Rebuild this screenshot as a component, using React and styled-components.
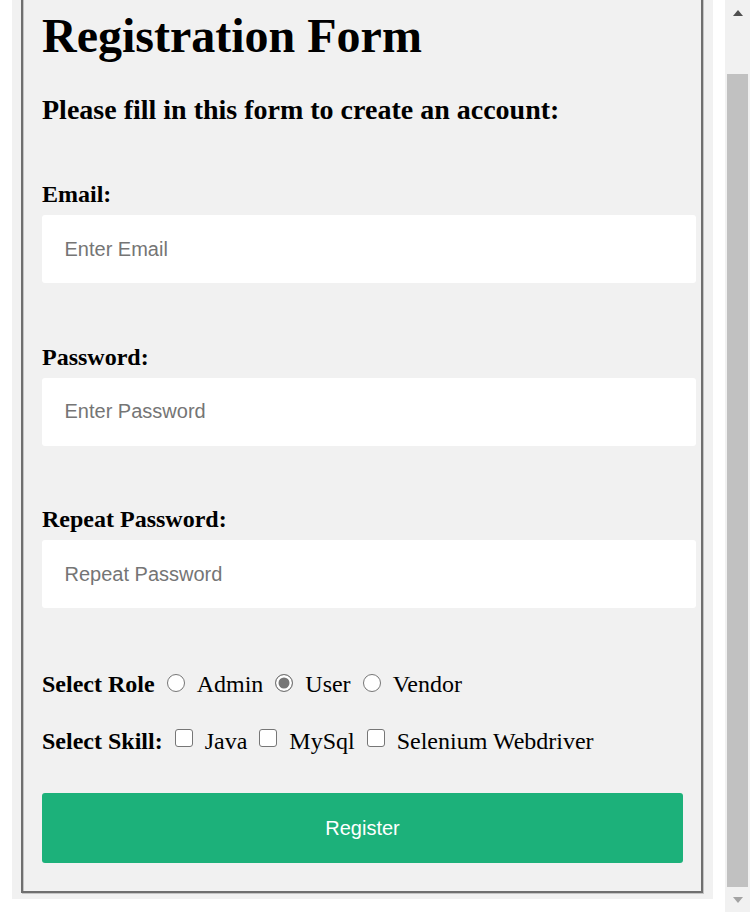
import React, { useLayoutEffect, useRef, useState } from "react";
import styled, { createGlobalStyle } from "styled-components";

const GlobalStyle = createGlobalStyle`
  html, body {
    margin: 0;
    padding: 0;
    height: 100%;
    overflow: hidden;
    background: #ffffff;
  }
  body {
    font-family: "Liberation Serif", "Times New Roman", serif;
    color: #000000;
  }
  * { box-sizing: border-box; }
`;

const Screen = styled.div`
  display: flex;
  width: 100vw;
  height: 100vh;
  background: #ffffff;
`;

const Viewport = styled.div`
  flex: 1;
  overflow: hidden;
`;

const Page = styled.div`
  padding: 12px 12px 13px 12px;
`;

const Container = styled.div`
  background: #f1f1f1;
  padding: 6px 6px 6px 6px;
`;

const Panel = styled.div`
  margin: 0 4px 0 3px;
  border: 2px solid #6f6f6f;
  box-shadow: inset 1px 1px 0 #c4c4c4, 1px 1px 0 #c4c4c4;
  padding: 9px 18px 15px 19px;
`;

const Form = styled.form`
  display: flex;
  flex-direction: column;
  align-items: flex-start;
`;

const Title = styled.h1`
  margin: 34px 0 0 0;
  font-size: 48px;
  line-height: 56px;
  font-weight: bold;
`;

const Subtitle = styled.h3`
  margin: 30px 0 0 0;
  font-size: 28px;
  line-height: 32px;
  font-weight: bold;
`;

const FieldLabel = styled.label`
  display: block;
  margin-top: ${(p) => (p.$first ? "54px" : "59.5px")};
  font-size: 24px;
  line-height: 28px;
  font-weight: bold;
`;

const TextInput = styled.input`
  box-sizing: content-box;
  display: block;
  width: 95%;
  height: 68px;
  margin-top: 7px;
  padding: 0 22.5px;
  border: none;
  border-radius: 3px;
  background: #ffffff;
  font-family: "Liberation Sans", Arial, sans-serif;
  font-size: 20px;
  color: #000;
  outline: none;
  &::placeholder {
    color: #757575;
  }
`;

const ChoiceRow = styled.div`
  display: flex;
  align-items: center;
  margin-top: ${(p) => p.$top};
  font-size: 24px;
  line-height: 28px;
`;

const RowTitle = styled.span`
  font-weight: bold;
`;

const Choice = styled.label`
  display: flex;
  align-items: center;
`;

const Radio = styled.input.attrs({ type: "radio" })`
  appearance: none;
  -webkit-appearance: none;
  width: 18px;
  height: 18px;
  margin: 0 12px;
  position: relative;
  top: -1px;
  border: 1.5px solid #767676;
  border-radius: 50%;
  background: #ffffff;
  &:checked {
    background: #767676;
    box-shadow: inset 0 0 0 2.5px #ffffff;
  }
`;

const Checkbox = styled.input.attrs({ type: "checkbox" })`
  appearance: none;
  -webkit-appearance: none;
  width: 18px;
  height: 18px;
  margin: 0 12px;
  position: relative;
  top: -3px;
  border: 1.5px solid #767676;
  border-radius: 3px;
  background: #ffffff;
`;

const SubmitButton = styled.button`
  width: 100%;
  height: 70px;
  margin: 38px 0 13px 0;
  border: none;
  border-radius: 3px;
  background: rgb(28, 177, 122);
  color: #ffffff;
  font-family: "Liberation Sans", Arial, sans-serif;
  font-size: 20px;
  cursor: pointer;
`;

const Scrollbar = styled.div`
  width: 25px;
  height: 100%;
  flex: none;
  background: #f1f1f1;
  display: flex;
  flex-direction: column;
`;

const ArrowButton = styled.div`
  height: 25px;
  flex: none;
  display: flex;
  align-items: center;
  justify-content: center;
`;

const Arrow = styled.span`
  width: 0;
  height: 0;
  border-left: 5.5px solid transparent;
  border-right: 5.5px solid transparent;
  ${(p) =>
    p.$down
      ? `border-top: 6px solid ${p.$color};`
      : `border-bottom: 6px solid ${p.$color};`}
`;

const Track = styled.div`
  flex: 1;
  padding: 0 2px;
  overflow: hidden;
`;

const Thumb = styled.div`
  width: 100%;
  background: #c1c1c1;
`;

export default function App() {
  const viewRef = useRef(null);
  const trackRef = useRef(null);
  const [thumb, setThumb] = useState({ top: 49, height: 813 });

  useLayoutEffect(() => {
    const v = viewRef.current;
    const t = trackRef.current;
    if (!v || !t) return;
    v.scrollTop = v.scrollHeight;
    const trackH = t.clientHeight;
    const ratio = v.clientHeight / v.scrollHeight;
    setThumb({
      top: (v.scrollTop / v.scrollHeight) * trackH,
      height: ratio * trackH,
    });
  }, []);

  return (
    <>
      <GlobalStyle />
      <Screen>
        <Viewport ref={viewRef}>
          <Page>
            <Container>
              <Panel>
                <Form onSubmit={(e) => e.preventDefault()}>
                  <Title>Registration Form</Title>
                  <Subtitle>Please fill in this form to create an account:</Subtitle>

                  <FieldLabel $first htmlFor="email">Email:</FieldLabel>
                  <TextInput id="email" type="text" placeholder="Enter Email" />

                  <FieldLabel htmlFor="psw">Password:</FieldLabel>
                  <TextInput id="psw" type="password" placeholder="Enter Password" />

                  <FieldLabel htmlFor="psw-repeat">Repeat Password:</FieldLabel>
                  <TextInput id="psw-repeat" type="password" placeholder="Repeat Password" />

                  <ChoiceRow $top="62px">
                    <RowTitle>Select Role</RowTitle>
                    <Choice>
                      <Radio name="role" value="admin" />
                      Admin
                    </Choice>
                    <Choice>
                      <Radio name="role" value="user" defaultChecked />
                      User
                    </Choice>
                    <Choice>
                      <Radio name="role" value="vendor" />
                      Vendor
                    </Choice>
                  </ChoiceRow>

                  <ChoiceRow $top="29px">
                    <RowTitle>Select Skill:</RowTitle>
                    <Choice>
                      <Checkbox value="java" />
                      Java
                    </Choice>
                    <Choice>
                      <Checkbox value="mysql" />
                      MySql
                    </Choice>
                    <Choice>
                      <Checkbox value="selenium" />
                      Selenium Webdriver
                    </Choice>
                  </ChoiceRow>

                  <SubmitButton type="submit">Register</SubmitButton>
                </Form>
              </Panel>
            </Container>
          </Page>
        </Viewport>
        <Scrollbar>
          <ArrowButton>
            <Arrow $color="#505050" />
          </ArrowButton>
          <Track ref={trackRef}>
            <Thumb style={{ marginTop: thumb.top, height: thumb.height }} />
          </Track>
          <ArrowButton>
            <Arrow $down $color="#a3a3a3" />
          </ArrowButton>
        </Scrollbar>
      </Screen>
    </>
  );
}
